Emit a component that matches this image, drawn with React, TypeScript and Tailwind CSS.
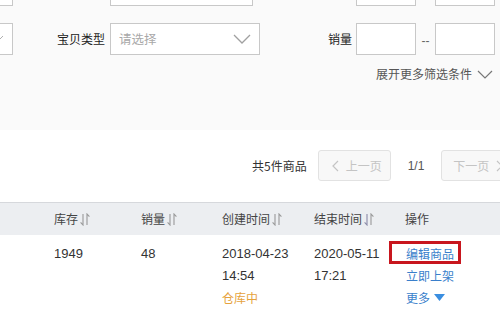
import React from "react";

const cjk = { fontFamily: '"Noto Sans CJK SC", "Liberation Sans", sans-serif' };
const num = { fontFamily: '"Liberation Sans", "Noto Sans CJK SC", sans-serif' };

function Chevron({ className = "" }: { className?: string }) {
  return (
    <svg width="18" height="10" viewBox="0 0 18 10" className={className}>
      <path d="M1 1 L9 9 L17 1" fill="none" stroke="#a0a0a0" strokeWidth="1.3" />
    </svg>
  );
}

function SortIcon({ dark = false }: { dark?: boolean }) {
  return (
    <svg width="10" height="13" viewBox="0 0 10 13" className="ml-[2px]">
      <path d="M3 1 V12 L0.6 9.4" fill="none" stroke={dark ? "#8a8aa8" : "#999"} strokeWidth="1.1" />
      <path d="M7 12 V1 L9.4 3.6" fill="none" stroke="#999" strokeWidth="1.1" />
    </svg>
  );
}

function Input({ w }: { w: string }) {
  return <div className={`${w} h-[32px] border border-[#c8c8c8] bg-white shrink-0`} />;
}

export default function App() {
  return (
    <div className="w-[500px] h-[330px] overflow-hidden bg-white text-[12px]" style={cjk}>
      {/* filter area */}
      <div className="h-[130px] bg-[#fafafa] overflow-hidden">
        <div className="flex h-[32px] -mt-[26px]">
          <div className="w-[33px] -ml-[20px] h-[32px] border border-[#c8c8c8] bg-white shrink-0" />
          <div className="ml-[97px] w-[143px] h-[32px] border border-[#c8c8c8] bg-white shrink-0" />
          <div className="ml-[103px]">
            <Input w="w-[60px]" />
          </div>
          <div className="ml-[19px]">
            <Input w="w-[60px]" />
          </div>
        </div>
        <div className="flex items-center h-[32px] mt-[17px]">
          <div className="w-[33px] -ml-[20px] h-[32px] border border-[#c8c8c8] bg-white shrink-0 flex items-center justify-end pr-[8px]">
            <svg width="6" height="6" viewBox="0 0 6 6">
              <path d="M0 5 L5 0" stroke="#b0b0b0" strokeWidth="1" fill="none" />
            </svg>
          </div>
          <span className="ml-[44px] w-[48px] text-[#222] leading-none">宝贝类型</span>
          <div className="ml-[5px] w-[150px] h-[32px] border border-[#c8c8c8] bg-white shrink-0 flex items-center justify-between pl-[8px] pr-[8px]">
            <span className="text-[#a8a8a8] text-[12.5px]">请选择</span>
            <Chevron />
          </div>
          <span className="ml-[68px] w-[24px] text-[#222] leading-none">销量</span>
          <div className="ml-[4px]">
            <Input w="w-[60px]" />
          </div>
          <span className="w-[19px] text-center text-[#666] pt-[4px]" style={num}>--</span>
          <Input w="w-[60px]" />
        </div>
        <div className="flex justify-end items-center pr-[7px] mt-[10px] h-[18px]">
          <span className="text-[#555]">展开更多筛选条件</span>
          <svg width="16" height="9" viewBox="0 0 16 9" className="ml-[5px]">
            <path d="M1 1 L8 8 L15 1" fill="none" stroke="#777" strokeWidth="1.2" />
          </svg>
        </div>
      </div>

      {/* pagination */}
      <div className="pt-[20px] flex items-center h-[51px]">
        <span className="ml-[252px] text-[#333] shrink-0">共5件商品</span>
        <div className="ml-[11px] w-[73px] h-[31px] shrink-0 border border-[#e2e2e2] bg-[#f8f8f8] rounded-[3px] flex items-center pl-[13px] text-[#c4c4c4]">
          <svg width="7" height="12" viewBox="0 0 7 12">
            <path d="M6 1 L1 6 L6 11" fill="none" stroke="#c4c4c4" strokeWidth="1.2" />
          </svg>
          <span className="ml-[7px]">上一页</span>
        </div>
        <span className="ml-[17px] text-[#555] shrink-0" style={num}>1/1</span>
        <div className="ml-[17px] w-[73px] h-[31px] shrink-0 border border-[#e2e2e2] bg-[#f8f8f8] rounded-[3px] flex items-center pl-[11px] text-[#c4c4c4]">
          <span>下一页</span>
          <svg width="7" height="12" viewBox="0 0 7 12" className="ml-[7px]">
            <path d="M1 1 L6 6 L1 11" fill="none" stroke="#c4c4c4" strokeWidth="1.2" />
          </svg>
        </div>
      </div>

      {/* table header */}
      <div className="mt-[21px] h-[33px] border-t border-[#d6d8dc] bg-[#eceef1] flex items-center text-[#444]">
        <div className="w-[54px] shrink-0" />
        <div className="w-[87px] shrink-0 flex items-center">库存<SortIcon /></div>
        <div className="w-[81px] shrink-0 flex items-center">销量<SortIcon /></div>
        <div className="w-[92px] shrink-0 flex items-center">创建时间<SortIcon /></div>
        <div className="w-[91px] shrink-0 flex items-center">结束时间<SortIcon dark /></div>
        <div className="shrink-0">操作</div>
      </div>

      {/* row */}
      <div className="flex pt-[8px] leading-[22px] text-[#333]">
        <div className="w-[54px] shrink-0" />
        <div className="w-[87px] shrink-0 text-[13px]" style={num}>1949</div>
        <div className="w-[81px] shrink-0 text-[13px]" style={num}>48</div>
        <div className="w-[92px] shrink-0 flex flex-col">
          <span className="text-[13px]" style={num}>2018-04-23</span>
          <span className="text-[13px]" style={num}>14:54</span>
          <span className="text-[#e6a23c]">仓库中</span>
        </div>
        <div className="w-[91px] shrink-0 flex flex-col">
          <span className="text-[13px]" style={num}>2020-05-11</span>
          <span className="text-[13px]" style={num}>17:21</span>
        </div>
        <div className="flex flex-col text-[#3a7fcb] pl-[1px]">
          <span className="relative">
            编辑商品
            <span className="absolute left-[-17px] top-[-2px] w-[72px] h-[23px] border-[3px] border-[#c8161e]" />
          </span>
          <span>立即上架</span>
          <span className="flex items-center">
            更多
            <svg width="11" height="8" viewBox="0 0 11 8" className="ml-[4px]">
              <path d="M0 0 H11 L5.5 7 Z" fill="#3a8ee0" />
            </svg>
          </span>
        </div>
      </div>
    </div>
  );
}
